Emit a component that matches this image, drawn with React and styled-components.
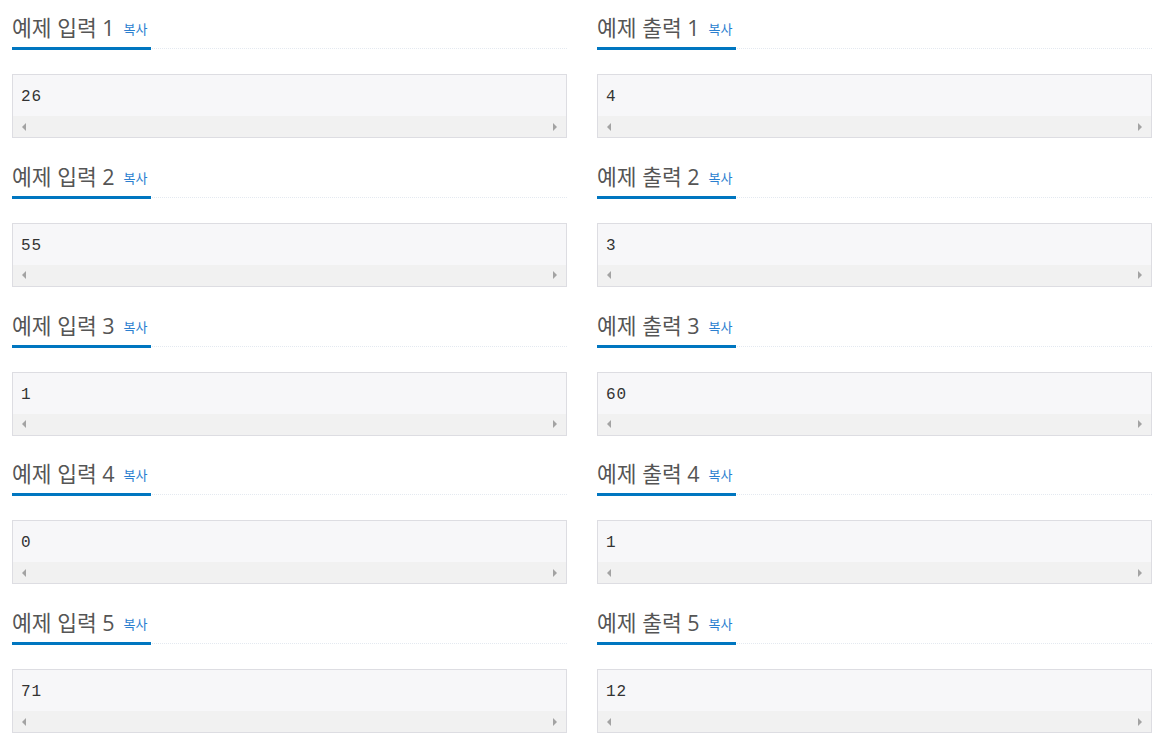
import React from "react";
import styled, { createGlobalStyle } from "styled-components";

const Global = createGlobalStyle`
  html, body { margin: 0; padding: 0; background: #fff; }
  body { font-family: "Open Sans", "Noto Sans CJK KR", sans-serif; }
`;

const Page = styled.div`
  display: grid;
  grid-template-columns: 555px 555px;
  column-gap: 30px;
  padding-left: 12px;
`;

const Section = styled.section`
  height: 148.75px;
  display: flex;
  flex-direction: column;
`;

const Headline = styled.div`
  border-bottom: 1px dotted #e4e9f0;
  height: 48px;
  display: flex;
  align-items: flex-start;
`;

const Title = styled.h2`
  margin: 0;
  padding: 14px 3px 5px 0;
  height: 28px;
  line-height: 28px;
  font-size: 21.5px;
  font-weight: 400;
  color: #555;
  border-bottom: 3px solid #0076c0;
  white-space: nowrap;
  display: flex;
  align-items: center;
`;

const Copy = styled.span`
  font-size: 13px;
  line-height: 16px;
  color: #2b7fcf;
  margin-left: 9px;
  margin-top: 2px;
`;

const Box = styled.div`
  margin-top: 25px;
  height: 62px;
  border: 1px solid #dddde2;
  background: #f7f7f9;
  display: flex;
  flex-direction: column;
`;

const Pre = styled.pre`
  margin: 0;
  height: 41px;
  padding: 0 8px;
  box-sizing: border-box;
  font-family: "Liberation Mono", "DejaVu Sans Mono", monospace;
  font-size: 16px;
  letter-spacing: 1px;
  line-height: 44px;
  color: #333;
`;

const Scrollbar = styled.div`
  height: 21px;
  background: #f1f1f1;
  display: flex;
  align-items: center;
  justify-content: space-between;
  padding: 0 9px;
`;

const Arrow = styled.span`
  width: 0;
  height: 0;
  border-top: 4px solid transparent;
  border-bottom: 4px solid transparent;
  ${(p) =>
    p.$dir === "left"
      ? "border-right: 4px solid #a3a3a3;"
      : "border-left: 4px solid #a3a3a3;"}
`;

const Sample = ({ label, n, value }) => (
  <Section>
    <Headline>
      <Title>
        예제 {label} {n}
        <Copy>복사</Copy>
      </Title>
    </Headline>
    <Box>
      <Pre>{value}</Pre>
      <Scrollbar>
        <Arrow $dir="left" />
        <Arrow $dir="right" />
      </Scrollbar>
    </Box>
  </Section>
);

const data = [
  ["26", "4"],
  ["55", "3"],
  ["1", "60"],
  ["0", "1"],
  ["71", "12"],
];

export default function App() {
  return (
    <>
      <Global />
      <Page>
        {data.map(([i, o], idx) => (
          <React.Fragment key={idx}>
            <Sample label="입력" n={idx + 1} value={i} />
            <Sample label="출력" n={idx + 1} value={o} />
          </React.Fragment>
        ))}
      </Page>
    </>
  );
}
